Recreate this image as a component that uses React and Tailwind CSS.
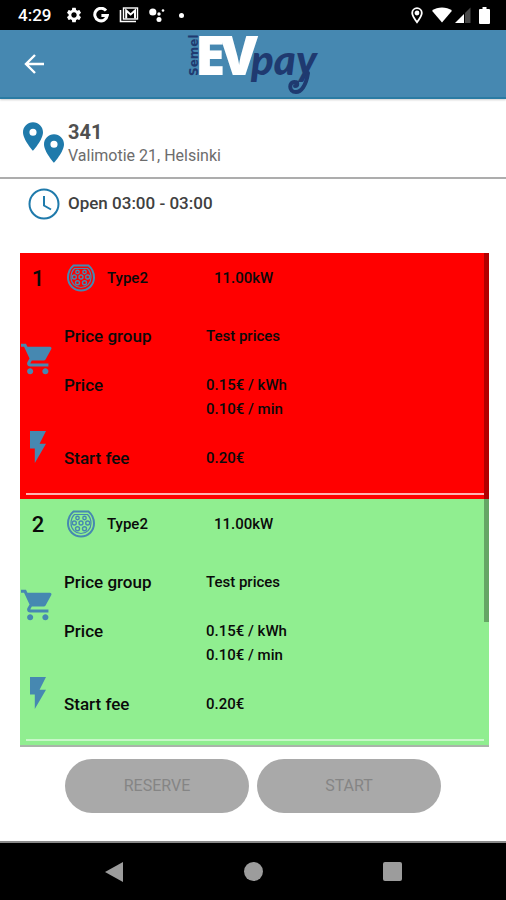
import { MdSettings } from "react-icons/md";

const PIN = "M12 2C8.13 2 5 5.13 5 9c0 5.25 7 13 7 13s7-7.75 7-13c0-3.87-3.13-7-7-7zm0 9.5a2.5 2.5 0 1 1 0-5 2.5 2.5 0 0 1 0 5z";

function StatusBar() {
  return (
    <div className="flex h-[30px] items-center bg-black pl-[18px] pr-4 text-white">
      <span className="text-[17px] font-medium leading-none">4:29</span>
      <MdSettings className="ml-3.5 size-[18px]" />
      <svg className="ml-2.5 size-4" viewBox="0 0 16 16" fill="none" stroke="currentColor" strokeWidth="3">
        <path d="M13 3.6A6.3 6.3 0 1 0 14.3 8.6H8.4" />
      </svg>
      <svg className="ml-2.5 h-4 w-5" viewBox="0 0 20 16" fill="none" stroke="currentColor">
        <path d="M1.5 3v11.5H17" strokeWidth="1.6" />
        <rect x="4.5" y="1" width="14" height="11" strokeWidth="1.4" />
        <path d="M7.2 11.5V3.5l4.4 4 4.4-4v8" strokeWidth="2" />
      </svg>
      <svg className="ml-2.5 h-4 w-[18px]" viewBox="0 0 18 16" fill="currentColor">
        <circle cx="3.8" cy="5" r="3.6" />
        <circle cx="10" cy="7" r="1.7" />
        <circle cx="10" cy="12.5" r="2.5" />
        <circle cx="14" cy="3.5" r="1.3" />
      </svg>
      <span className="ml-3 size-[5px] rounded-full bg-white" />
      <div className="ml-auto flex items-center">
        <svg className="h-[17px] w-3" viewBox="0 0 12 17" fill="none" stroke="currentColor" strokeWidth="1.8">
          <path d="M6 15.2C3.2 11.5 1.2 8.6 1.2 6a4.8 4.8 0 0 1 9.6 0c0 2.6-2 5.5-4.8 9.2z" />
          <circle cx="6" cy="6" r="1.5" fill="currentColor" />
        </svg>
        <svg className="ml-[9px] h-4 w-5" viewBox="0 0 20 16" fill="currentColor">
          <path d="M10 15.5 0 3.800C5.5-.5 14.5-.5 20 3.800z" />
        </svg>
        <svg className="ml-[3px] size-4" viewBox="0 0 16 16" fill="currentColor">
          <path d="M0 16 9 7v9z" />
          <path d="M10 6l5.500-5.500V16H10z" fill="#484848" />
        </svg>
        <svg className="ml-2 h-[17px] w-[11px]" viewBox="0 0 11 17" fill="currentColor">
          <path d="M3.5 0h4v2H10a1 1 0 0 1 1 1v13a1 1 0 0 1-1 1H1a1 1 0 0 1-1-1V3a1 1 0 0 1 1-1h2.500z" />
        </svg>
      </div>
    </div>
  );
}

function Logo() {
  return (
    <svg className="h-[66px] w-[132px] overflow-visible" viewBox="0 0 132 66" role="img" aria-label="Semel EVpay">
      <text transform="translate(11 45) rotate(-90)" fontSize="12" fontWeight="700" fill="#1f3a70" fontFamily="'DejaVu Sans', sans-serif">Semel</text>
      <text y="44" fontSize="55" fontWeight="800" fill="#fff" fontFamily="'Open Sans', sans-serif">
        <tspan x="8">E</tspan>
        <tspan x="33">V</tspan>
      </text>
      <text x="64" y="44" fontSize="42" fontWeight="900" fontStyle="italic" fill="#1f3a70" fontFamily="Lato, sans-serif">pay</text>
      <path d="M121 42C119 55 114 61 109 61C101 61 102 50 108 51C111 51 111 55 108 55" fill="none" stroke="#1f3a70" strokeWidth="4" strokeLinecap="round" />
    </svg>
  );
}

function Type2Icon() {
  return (
    <svg className="size-7 text-[#4688b1]" viewBox="0 0 28 28" fill="none" stroke="currentColor">
      <path d="M6.5 1.5h15C24.5 4 27 8 27 13.500a13 13 0 0 1-26 0C1 8 3.500 4 6.500 1.500z" strokeWidth="2" />
      <path d="M7.5 4.5h13c2.200 2 3.500 5 3.500 9a10 10 0 0 1-20 0c0-4 1.300-7 3.500-9z" strokeWidth="1.200" />
      <g strokeWidth="1.400">
        <circle cx="10.500" cy="8" r="1.700" />
        <circle cx="17.500" cy="8" r="1.700" />
        <circle cx="7.300" cy="13" r="2" />
        <circle cx="14" cy="13" r="2" />
        <circle cx="20.700" cy="13" r="2" />
        <circle cx="10.500" cy="18.800" r="2" />
        <circle cx="17.500" cy="18.800" r="2" />
      </g>
    </svg>
  );
}

function Connector({ number, tone, rule }) {
  return (
    <li className={`flex h-[246px] flex-col ${tone}`}>
      <div className="flex h-[50px] items-center text-[15px] font-medium">
        <span className="w-9 text-center text-[22px]">{number}</span>
        <span className="ml-[11px] w-10">
          <Type2Icon />
        </span>
        <span className="w-[107px]">Type2</span>
        <span>11.00kW</span>
      </div>
      <div className="flex">
        <div className="flex w-11 flex-col gap-14 pt-10 text-[#4688b1]">
          <svg className="ml-px size-8" viewBox="1 2 21 20" fill="currentColor">
            <path d="M7 18c-1.100 0-1.990.9-1.990 2S5.900 22 7 22s2-.9 2-2-.9-2-2-2zM1 2v2h2l3.600 7.590-1.350 2.450c-.16.280-.25.610-.25.960 0 1.100.9 2 2 2h12v-2H7.420c-.14 0-.25-.11-.25-.25l.03-.12.900-1.630h7.450c.750 0 1.410-.41 1.750-1.030l3.580-6.490A1.003 1.003 0 0 0 20 4H5.210l-.94-2H1zm16 16c-1.100 0-1.990.9-1.990 2s.890 2 1.990 2 2-.9 2-2-.9-2-2-2z" />
          </svg>
          <svg className="ml-2.5 h-8 w-4" viewBox="7 2 10 20" fill="currentColor">
            <path d="M7 2v11h3v9l7-12h-4l4-8z" />
          </svg>
        </div>
        <dl className="grid flex-1 grid-cols-[142px_1fr] gap-y-[25px] pt-[21px] text-[15px] font-medium leading-6">
          <dt className="text-[17px]">Price group</dt>
          <dd>Test prices</dd>
          <dt className="text-[17px]">Price</dt>
          <dd>
            0.15€ / kWh
            <br />
            0.10€ / min
          </dd>
          <dt className="text-[17px]">Start fee</dt>
          <dd>0.20€</dd>
        </dl>
      </div>
      <div className={`mb-1 ml-1.5 mr-[5px] mt-auto h-0.5 ${rule}`} />
    </li>
  );
}

function ActionButton({ children }) {
  return (
    <button
      type="button"
      disabled
      className="h-[54px] max-w-[184px] flex-1 rounded-full bg-[#a9a9a9] text-base text-[#858585]"
    >
      {children}
    </button>
  );
}

export default function App() {
  return (
    <div className="flex min-h-screen flex-col bg-white font-['Roboto',sans-serif] text-[#0a0a0a]">
      <StatusBar />
      <header className="grid h-[69px] grid-cols-[1fr_auto_1fr] items-center border-b-2 border-[#2a7ba3] bg-[#4688b1] shadow-[0_1px_2px_rgba(0,0,0,0.2)]">
        <button type="button" aria-label="Back" className="ml-6 w-5 text-white">
          <svg className="size-5" viewBox="0 0 20 20" fill="none" stroke="currentColor" strokeWidth="2.400">
            <path d="M20 10H2M11 1 2 10l9 9" />
          </svg>
        </button>
        <Logo />
      </header>

      <section className="flex h-20 items-center border-b-2 border-[#adadad] pl-[23px] pt-2">
        <div className="flex w-[45px] gap-px text-[#1f7aab]">
          <svg className="mb-3 h-[29px] w-5" viewBox="5 2 14 20" fill="currentColor">
            <path d={PIN} />
          </svg>
          <svg className="mt-3 h-[29px] w-5" viewBox="5 2 14 20" fill="currentColor">
            <path d={PIN} />
          </svg>
        </div>
        <div className="pt-1">
          <h1 className="text-xl font-bold leading-6 text-[#505050]">341</h1>
          <p className="text-base leading-6 text-[#6c6c6c]">Valimotie 21, Helsinki</p>
        </div>
      </section>

      <div className="flex h-[50px] items-center pl-7">
        <svg className="w-10 text-[#1f7aab]" viewBox="0 0 40 32" fill="none" stroke="currentColor" strokeWidth="2">
          <circle cx="16" cy="16" r="14.500" />
          <path d="M16 8v9.500l7 4" />
        </svg>
        <p className="text-[17px] font-medium text-[#404040]">Open 03:00 - 03:00</p>
      </div>

      <main className="mt-6 px-5">
        <div className="relative -mr-[3px] border-b-2 border-[#a9b5a9]">
          <ul>
            <Connector number="1" tone="bg-[#ff0000]" rule="bg-white/70" />
            <Connector number="2" tone="bg-[#90ee90]" rule="bg-white/50" />
          </ul>
          <div className="absolute right-0 top-0 h-3/4 w-[5px] bg-black/30" />
        </div>
      </main>

      <div className="flex justify-center gap-2 px-5 pb-7 pt-3">
        <ActionButton>RESERVE</ActionButton>
        <ActionButton>START</ActionButton>
      </div>

      <nav className="mt-auto flex h-[59px] items-center justify-center gap-[120px] border-t-2 border-[#8a8a8a] bg-black text-[#9c9c9c]">
        <button type="button" aria-label="Back">
          <svg className="size-5" viewBox="0 0 20 20" fill="currentColor">
            <path d="M19 0v20L1 10z" />
          </svg>
        </button>
        <button type="button" aria-label="Home" className="size-[19px] rounded-full bg-[#9c9c9c]" />
        <button type="button" aria-label="Recents" className="size-[19px] rounded-xs bg-[#9c9c9c]" />
      </nav>
    </div>
  );
}
